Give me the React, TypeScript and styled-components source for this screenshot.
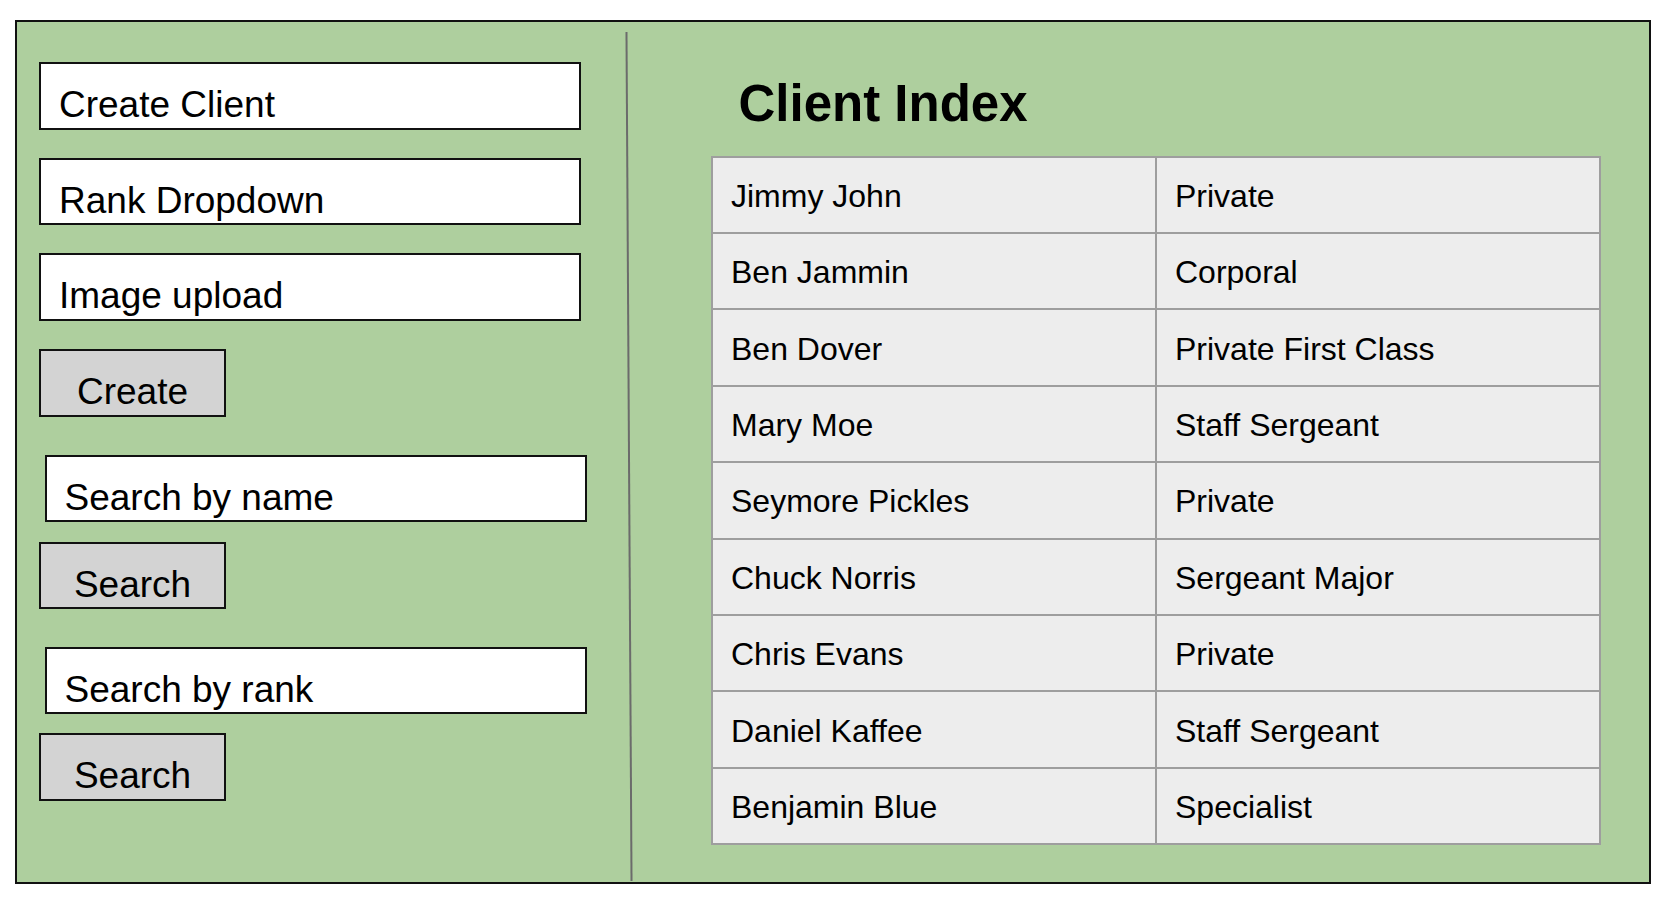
import React from "react";
import styled, { createGlobalStyle } from "styled-components";

const GlobalStyle = createGlobalStyle`
  html, body {
    margin: 0;
    padding: 0;
    background: #ffffff;
  }
  body {
    font-family: "Liberation Sans", Arial, sans-serif;
    color: #000;
  }
  * { box-sizing: border-box; }
`;

const Frame = styled.div`
  width: 1636px;
  height: 864px;
  margin: 20px 0 0 15px;
  border: 2px solid #111;
  background: #aecf9e;
  display: flex;
  flex-direction: row;
`;

const LeftPanel = styled.div`
  flex: 0 0 611px;
  display: flex;
  flex-direction: column;
  padding: 40px 0 0 22px;
`;

const Section = styled.div<{ $gap: number; $top?: number }>`
  display: flex;
  flex-direction: column;
  gap: ${(p) => p.$gap}px;
  margin-top: ${(p) => p.$top ?? 0}px;
`;

const Field = styled.div<{ $indent?: number }>`
  width: 542px;
  height: 67.5px;
  margin-left: ${(p) => p.$indent ?? 0}px;
  border: 2px solid #111;
  background: #ffffff;
  padding: 22px 0 0 18px;
  font-size: 37px;
  line-height: 37px;
  white-space: nowrap;
`;

const Button = styled.div`
  width: 187px;
  height: 67.5px;
  border: 2px solid #111;
  background: #d3d3d3;
  padding-top: 22px;
  font-size: 37px;
  line-height: 37px;
  text-align: center;
  white-space: nowrap;
`;

const Divider = styled.div`
  flex: 0 0 1.5px;
  margin: 10px 0 1px 0;
  background: #6b6b6b;
  transform: rotate(-0.34deg);
`;

const RightPanel = styled.div`
  flex: 1;
  display: flex;
  flex-direction: column;
  padding: 57px 0 0 81.5px;
`;

const Title = styled.h1`
  margin: 0 0 26.6px 27.5px;
  font-size: 51px;
  line-height: 50px;
  font-weight: 700;
  font-family: "Liberation Sans", Arial, sans-serif;
`;

const Table = styled.div`
  width: 890px;
  display: grid;
  grid-template-columns: 1fr 1fr;
  grid-auto-rows: 74.4px;
  gap: 2px;
  padding: 2px;
  background: #9e9e9e;
`;

const Cell = styled.div`
  background: #ededed;
  display: flex;
  align-items: center;
  padding: 3px 0 0 18px;
  font-size: 32px;
  white-space: nowrap;
`;

const clients: [string, string][] = [
  ["Jimmy John", "Private"],
  ["Ben Jammin", "Corporal"],
  ["Ben Dover", "Private First Class"],
  ["Mary Moe", "Staff Sergeant"],
  ["Seymore Pickles", "Private"],
  ["Chuck Norris", "Sergeant Major"],
  ["Chris Evans", "Private"],
  ["Daniel Kaffee", "Staff Sergeant"],
  ["Benjamin Blue", "Specialist"],
];

export default function App() {
  return (
    <>
      <GlobalStyle />
      <Frame>
        <LeftPanel>
          <Section $gap={28.2}>
            <Field>Create Client</Field>
            <Field>Rank Dropdown</Field>
            <Field>Image upload</Field>
            <Button>Create</Button>
          </Section>
          <Section $gap={19.4} $top={38.2}>
            <Field $indent={5.5}>Search by name</Field>
            <Button>Search</Button>
          </Section>
          <Section $gap={19} $top={37.8}>
            <Field $indent={5.5}>Search by rank</Field>
            <Button>Search</Button>
          </Section>
        </LeftPanel>
        <Divider />
        <RightPanel>
          <Title>Client Index</Title>
          <Table>
            {clients.map(([name, rank], i) => (
              <React.Fragment key={i}>
                <Cell>{name}</Cell>
                <Cell>{rank}</Cell>
              </React.Fragment>
            ))}
          </Table>
        </RightPanel>
      </Frame>
    </>
  );
}
